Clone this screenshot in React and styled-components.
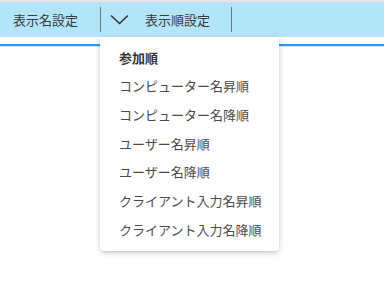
import React from "react";
import styled, { createGlobalStyle } from "styled-components";

const Global = createGlobalStyle`
  html, body { margin: 0; padding: 0; background: #ffffff; }
  body { font-family: "Noto Sans CJK JP", "Noto Sans", sans-serif; }
`;

const Page = styled.div`
  position: relative;
  width: 384px;
  height: 288px;
  overflow: hidden;
`;

const Toolbar = styled.div`
  display: flex;
  align-items: center;
  height: 35px;
  border-top: 2px solid #e9e4e4;
  background: #b3e5f8;
`;

const Label = styled.div`
  font-size: 13px;
  color: #3a3a3a;
  padding-left: ${(p) => p.$pl}px;
  width: ${(p) => p.$w}px;
  line-height: 35px;
  white-space: nowrap;
`;

const Divider = styled.div`
  width: 1px;
  height: 25px;
  background: #6f7a80;
`;

const ChevronBox = styled.div`
  display: flex;
  align-items: center;
  box-sizing: border-box;
  padding-left: 9px;
  width: 44px;
  height: 35px;
`;

const Rule = styled.div`
  margin-top: 7px;
  height: 2px;
  background: #2a9df4;
  border-bottom: 1px solid #c9e6fb;
`;

const Menu = styled.div`
  position: absolute;
  left: 100px;
  top: 37px;
  width: 179px;
  padding: 6px 0 7px;
  background: #fff;
  border-radius: 0 0 4px 4px;
  box-shadow: 0 2px 6px rgba(0, 0, 0, 0.18), 0 1px 2px rgba(0, 0, 0, 0.08);
`;

const Item = styled.div`
  height: 28.67px;
  display: flex;
  align-items: center;
  padding-left: 19px;
  font-size: 13px;
  color: ${(p) => (p.$bold ? "#333" : "#4a4a4a")};
  font-weight: ${(p) => (p.$bold ? 700 : 400)};
  white-space: nowrap;
`;

const items = [
  "コンピューター名昇順",
  "コンピューター名降順",
  "ユーザー名昇順",
  "ユーザー名降順",
  "クライアント入力名昇順",
  "クライアント入力名降順",
];

export default function App() {
  return (
    <Page>
      <Global />
      <Toolbar>
        <Label $pl={13} $w={87}>表示名設定</Label>
        <Divider />
        <ChevronBox>
          <svg width="19" height="11" viewBox="0 0 19 11">
            <path d="M1 1.5 L9.5 9.5 L18 1.5" fill="none" stroke="#333" strokeWidth="1.6" />
          </svg>
        </ChevronBox>
        <Label $pl={0} $w={86}>表示順設定</Label>
        <Divider />
      </Toolbar>
      <Rule />
      <Menu>
        <Item $bold>参加順</Item>
        {items.map((t) => (
          <Item key={t}>{t}</Item>
        ))}
      </Menu>
    </Page>
  );
}
